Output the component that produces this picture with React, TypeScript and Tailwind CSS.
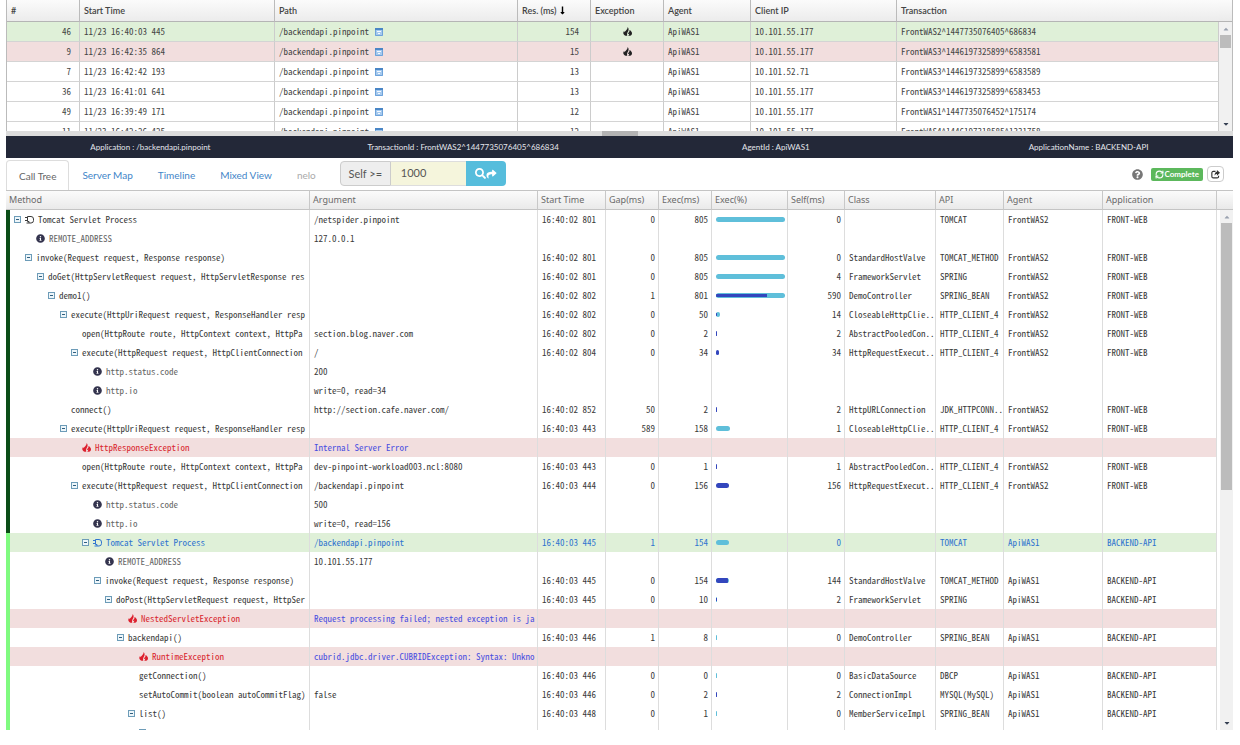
import { FaSearch, FaShare, FaQuestionCircle, FaInfoCircle, FaLongArrowAltDown, FaCaretUp, FaCaretDown } from 'react-icons/fa';
import { LuRefreshCw } from 'react-icons/lu';
import clsx from 'clsx';

interface Transaction {
    id: number;
    start: string;
    res: number;
    exception?: boolean;
    ip: string;
    txId: string;
    tone?: 'green' | 'red';
}

interface CallRow {
    depth: number;
    name: string;
    open?: boolean;
    kind?: 'info' | 'error' | 'process';
    arg?: string;
    start?: string;
    gap?: number;
    exec?: number;
    self?: number;
    cls?: string;
    api?: string;
    remote?: boolean;
    tone?: 'green' | 'red';
}

const TOTAL_MS = 805;
const INDENT = 11.4;

const TRANSACTIONS: Transaction[] = [
    { id: 46, start: '11/23 16:40:03 445', res: 154, exception: true, ip: '10.101.55.177', txId: 'FrontWAS2^1447735076405^686834', tone: 'green' },
    { id: 9, start: '11/23 16:42:35 864', res: 15, exception: true, ip: '10.101.55.177', txId: 'FrontWAS3^1446197325899^6583581', tone: 'red' },
    { id: 7, start: '11/23 16:42:42 193', res: 13, ip: '10.101.52.71', txId: 'FrontWAS3^1446197325899^6583589' },
    { id: 36, start: '11/23 16:41:01 641', res: 13, ip: '10.101.55.177', txId: 'FrontWAS3^1446197325899^6583453' },
    { id: 49, start: '11/23 16:39:49 171', res: 12, ip: '10.101.55.177', txId: 'FrontWAS1^1447735076452^175174' },
    { id: 11, start: '11/23 16:42:26 425', res: 12, ip: '10.101.55.177', txId: 'FrontWAS4^1446197318585^1331758' },
];

const CALLS: CallRow[] = [
    { depth: 0, name: 'Tomcat Servlet Process', open: true, kind: 'process', arg: '/netspider.pinpoint', start: '16:40:02 801', gap: 0, exec: 805, self: 0, api: 'TOMCAT' },
    { depth: 1, name: 'REMOTE_ADDRESS', kind: 'info', arg: '127.0.0.1' },
    { depth: 1, name: 'invoke(Request request, Response response)', open: true, start: '16:40:02 801', gap: 0, exec: 805, self: 0, cls: 'StandardHostValve', api: 'TOMCAT_METHOD' },
    { depth: 2, name: 'doGet(HttpServletRequest request, HttpServletResponse res', open: true, start: '16:40:02 801', gap: 0, exec: 805, self: 4, cls: 'FrameworkServlet', api: 'SPRING' },
    { depth: 3, name: 'demo1()', open: true, start: '16:40:02 802', gap: 1, exec: 801, self: 590, cls: 'DemoController', api: 'SPRING_BEAN' },
    { depth: 4, name: 'execute(HttpUriRequest request, ResponseHandler resp', open: true, start: '16:40:02 802', gap: 0, exec: 50, self: 14, cls: 'CloseableHttpClie..', api: 'HTTP_CLIENT_4' },
    { depth: 5, name: 'open(HttpRoute route, HttpContext context, HttpPa', arg: 'section.blog.naver.com', start: '16:40:02 802', gap: 0, exec: 2, self: 2, cls: 'AbstractPooledCon..', api: 'HTTP_CLIENT_4' },
    { depth: 5, name: 'execute(HttpRequest request, HttpClientConnection', open: true, arg: '/', start: '16:40:02 804', gap: 0, exec: 34, self: 34, cls: 'HttpRequestExecut..', api: 'HTTP_CLIENT_4' },
    { depth: 6, name: 'http.status.code', kind: 'info', arg: '200' },
    { depth: 6, name: 'http.io', kind: 'info', arg: 'write=0, read=34' },
    { depth: 4, name: 'connect()', arg: 'http://section.cafe.naver.com/', start: '16:40:02 852', gap: 50, exec: 2, self: 2, cls: 'HttpURLConnection', api: 'JDK_HTTPCONN..' },
    { depth: 4, name: 'execute(HttpUriRequest request, ResponseHandler resp', open: true, start: '16:40:03 443', gap: 589, exec: 158, self: 1, cls: 'CloseableHttpClie..', api: 'HTTP_CLIENT_4' },
    { depth: 5, name: 'HttpResponseException', kind: 'error', arg: 'Internal Server Error', tone: 'red' },
    { depth: 5, name: 'open(HttpRoute route, HttpContext context, HttpPa', arg: 'dev-pinpoint-workload003.ncl:8080', start: '16:40:03 443', gap: 0, exec: 1, self: 1, cls: 'AbstractPooledCon..', api: 'HTTP_CLIENT_4' },
    { depth: 5, name: 'execute(HttpRequest request, HttpClientConnection', open: true, arg: '/backendapi.pinpoint', start: '16:40:03 444', gap: 0, exec: 156, self: 156, cls: 'HttpRequestExecut..', api: 'HTTP_CLIENT_4' },
    { depth: 6, name: 'http.status.code', kind: 'info', arg: '500' },
    { depth: 6, name: 'http.io', kind: 'info', arg: 'write=0, read=156' },
    { depth: 6, name: 'Tomcat Servlet Process', open: true, kind: 'process', arg: '/backendapi.pinpoint', start: '16:40:03 445', gap: 1, exec: 154, self: 0, api: 'TOMCAT', remote: true, tone: 'green' },
    { depth: 7, name: 'REMOTE_ADDRESS', kind: 'info', arg: '10.101.55.177', remote: true },
    { depth: 7, name: 'invoke(Request request, Response response)', open: true, start: '16:40:03 445', gap: 0, exec: 154, self: 144, cls: 'StandardHostValve', api: 'TOMCAT_METHOD', remote: true },
    { depth: 8, name: 'doPost(HttpServletRequest request, HttpSer', open: true, start: '16:40:03 445', gap: 0, exec: 10, self: 2, cls: 'FrameworkServlet', api: 'SPRING', remote: true },
    { depth: 9, name: 'NestedServletException', kind: 'error', arg: 'Request processing failed; nested exception is ja', remote: true, tone: 'red' },
    { depth: 9, name: 'backendapi()', open: true, start: '16:40:03 446', gap: 1, exec: 8, self: 0, cls: 'DemoController', api: 'SPRING_BEAN', remote: true },
    { depth: 10, name: 'RuntimeException', kind: 'error', arg: 'cubrid.jdbc.driver.CUBRIDException: Syntax: Unkno', remote: true, tone: 'red' },
    { depth: 10, name: 'getConnection()', start: '16:40:03 446', gap: 0, exec: 0, self: 0, cls: 'BasicDataSource', api: 'DBCP', remote: true },
    { depth: 10, name: 'setAutoCommit(boolean autoCommitFlag)', arg: 'false', start: '16:40:03 446', gap: 0, exec: 2, self: 2, cls: 'ConnectionImpl', api: 'MYSQL(MySQL)', remote: true },
    { depth: 10, name: 'list()', open: true, start: '16:40:03 448', gap: 0, exec: 1, self: 0, cls: 'MemberServiceImpl', api: 'SPRING_BEAN', remote: true },
    { depth: 11, name: '', open: true, remote: true },
];

const TABS = ['Call Tree', 'Server Map', 'Timeline', 'Mixed View', 'nelo'];
const MONO = "font-['Noto_Sans_Mono_CJK_JP','Liberation_Mono',monospace]";

function Flame({ className }: { className?: string }) {
    return (
        <svg viewBox="0 0 16 16" fill="currentColor" className={clsx('h-[9px] w-[9px] shrink-0', className)}>
            <path d="M8 0c2.500 2.200 2.400 5 1.200 7.500C8.200 9.600 6.500 11 7.500 15.500H4.500C2 14.500.5 12.500.5 10.500c0-1.500.7-2.700 1.600-3.500 0 1 .3 1.700.9 2.200C4.500 6 8.800 4.500 8 0z" />
            <path d="M11.500 5.500c2.500 1.200 4.500 3.500 4.500 6 0 2-1.500 3.500-3.500 4H9c1.800-1.500 2.300-2.800 1.900-4.500-.5 1-1.200 1.500-2.100 1.500C8.800 10 12.500 9 11.500 5.500z" />
        </svg>
    );
}

function Toggle() {
    return (
        <button aria-label="Collapse" className="mr-1 h-[7px] w-[7px] shrink-0">
            <svg viewBox="0 0 7 7" className="block h-[7px] w-[7px]">
                <rect x=".5" y=".5" width="6" height="6" fill="#eef6fa" stroke="#6d9cb8" />
                <path d="M2 3.500h3" stroke="#2f5f80" />
            </svg>
        </button>
    );
}

function ProcessIcon() {
    return (
        <svg viewBox="0 0 9 8" fill="none" stroke="currentColor" className="h-2 w-[9px] shrink-0">
            <path d="M2.500.5H6a2.500 2.500 0 0 1 2.500 2.500v1.500A2.500 2.500 0 0 1 6 7H4V5.500H2.500z" />
            <path d="M0 1.500h3M0 4.500h3M1.500 7H4" />
        </svg>
    );
}

function DetailIcon() {
    return (
        <svg viewBox="0 0 8 8" className="h-2 w-2">
            <rect width="8" height="8" fill="#a5c9ee" />
            <rect width="8" height="2" fill="#4a86c6" />
            <path d="M2 3.500h4M3 5.500h2" stroke="#f4f9ff" />
            <path d="M.5 2v5.500h7V2" fill="none" stroke="#6ea3da" />
        </svg>
    );
}

function Scrollbar({ thumb }: { thumb: string }) {
    return (
        <div className="flex min-h-0 flex-1 flex-col items-center bg-[#f1f1f1] py-[3px]">
            <FaCaretUp className="h-2 w-2 text-gray-400" />
            <div className="flex min-h-0 w-full flex-1 flex-col px-px py-[2px]">
                <div className={clsx('w-full bg-[#bcbcbc]', thumb)} />
            </div>
            <FaCaretDown className="h-2 w-2 text-gray-700" />
        </div>
    );
}

function ExecBar({ exec, self }: { exec: number; self: number }) {
    const width = Math.min(100, (exec / TOTAL_MS) * 100);
    const inner = exec ? (self / exec) * 100 : 0;
    return (
        <div className="flex h-[5px] min-w-px items-center overflow-hidden rounded-full bg-[#5fbfda]" style={{ width: `${width}%` }}>
            {inner > 5 && (
                <div className={clsx('bg-[#3346bd]', inner > 90 ? 'h-[5px]' : 'h-[3px]')} style={{ width: `${inner}%` }} />
            )}
        </div>
    );
}

function TransactionList() {
    const th = 'h-[22px] border-r border-b border-r-[#bbb] border-b-[#b5b5b5] px-1 text-left font-semibold';
    const td = 'h-[20px] truncate border-r border-b border-r-[#ccc] border-b-[#d4d4d4] px-1';
    return (
        <section className="flex h-[131px] shrink-0 overflow-hidden border-x border-[#bbb]">
            <div className="min-w-0 flex-1">
                <table className="w-full table-fixed border-separate border-spacing-0 text-[9px] leading-3 text-[#444]">
                    <colgroup>
                        <col className="w-[73px]" />
                        <col className="w-[195px]" />
                        <col className="w-[243px]" />
                        <col className="w-[73px]" />
                        <col className="w-[73px]" />
                        <col className="w-[87px]" />
                        <col className="w-[146px]" />
                        <col />
                    </colgroup>
                    <thead className="bg-linear-to-b from-[#fbfbfb] to-[#ebebeb] font-['Lato',sans-serif]">
                        <tr>
                            <th className={th}>#</th>
                            <th className={th}>Start Time</th>
                            <th className={th}>Path</th>
                            <th className={th}>
                                <span className="flex items-center gap-px">Res. (ms) <FaLongArrowAltDown className="h-[9px] w-[9px] text-black" /></span>
                            </th>
                            <th className={th}>Exception</th>
                            <th className={th}>Agent</th>
                            <th className={th}>Client IP</th>
                            <th className="h-[22px] border-b border-b-[#b5b5b5] px-1 text-left font-semibold">Transaction</th>
                        </tr>
                    </thead>
                    <tbody className={MONO}>
                        {TRANSACTIONS.map(t => (
                            <tr key={t.id} className={clsx(t.tone === 'green' && 'bg-[#dff0d8]', t.tone === 'red' && 'bg-[#f2dede]')}>
                                <td className={clsx(td, 'pr-2 text-right')}>{t.id}</td>
                                <td className={td}>{t.start}</td>
                                <td className={td}>
                                    <span className="flex items-center gap-[6px]">/backendapi.pinpoint <DetailIcon /></span>
                                </td>
                                <td className={clsx(td, 'pr-[11px] text-right')}>{t.res}</td>
                                <td className={td}>{t.exception && <Flame className="mx-auto text-[#222]" />}</td>
                                <td className={td}>ApiWAS1</td>
                                <td className={td}>{t.ip}</td>
                                <td className={td}>{t.txId}</td>
                            </tr>
                        ))}
                    </tbody>
                </table>
            </div>
            <div className="flex w-[13px] shrink-0 flex-col">
                <div className="h-[22px] border-b border-[#b5b5b5] bg-linear-to-b from-[#fbfbfb] to-[#ebebeb]" />
                <Scrollbar thumb="h-[13px]" />
            </div>
        </section>
    );
}

function Summary() {
    return (
        <div className="h-[22px] shrink-0 overflow-hidden bg-[#232838] text-[8px] leading-[22px] text-[#e4e6ec]">
            <div className="-mx-3 grid grid-cols-4 text-center">
                <span>Application : /backendapi.pinpoint</span>
                <span>TransactionId : FrontWAS2^1447735076405^686834</span>
                <span>AgentId : ApiWAS1</span>
                <span>ApplicationName : BACKEND-API</span>
            </div>
        </div>
    );
}

function Toolbar() {
    return (
        <div className="flex h-8 shrink-0 items-end text-[10px]">
            <nav className="flex gap-px">
                {TABS.map((tab, i) => (
                    <a
                        key={tab}
                        href="#"
                        className={clsx(
                            'h-[30px] px-3 leading-[30px]',
                            i === 0 && 'rounded-t-sm border-x border-t border-[#ddd] text-[#666]',
                            i > 0 && i < 4 && 'text-[#4285c8]',
                            i === 4 && 'text-[#aaa]',
                        )}
                    >
                        {tab}
                    </a>
                ))}
            </nav>
            <form className="mb-1 ml-3 flex h-[25px] text-[11px] text-[#555]">
                <label htmlFor="self" className="w-[51px] rounded-l-sm border border-[#ccc] bg-[#eee] text-center leading-[23px]">Self &gt;=</label>
                <input id="self" defaultValue="1000" className="w-[75px] border-y border-[#ddd] bg-[#f5f5dc] px-[10px] outline-none" />
                <button type="button" aria-label="Search" className="flex w-10 items-center justify-center rounded-r-sm bg-[#56bddc] text-white">
                    <FaSearch className="h-[11px] w-[11px]" />
                    <FaShare className="h-[10px] w-[11px]" />
                </button>
            </form>
            <div className="mr-[9px] mb-2 ml-auto flex items-center gap-1">
                <FaQuestionCircle className="mr-1 h-[11px] w-[11px] text-[#777]" />
                <button className="flex h-[13px] items-center gap-px rounded-xs bg-[#5cb85c] px-1 text-[8px] font-bold text-white">
                    <LuRefreshCw className="h-[9px] w-[9px]" strokeWidth={3} />
                    Complete
                </button>
                <button aria-label="Open in new window" className="flex h-4 w-[17px] items-center justify-center rounded-sm border border-[#ccc] text-[#333]">
                    <svg viewBox="0 0 16 16" className="h-[9px] w-[9px]">
                        <path d="M8 2.500H4a2.500 2.500 0 0 0-2.500 2.500v6.500A2.500 2.500 0 0 0 4 14h7a2.500 2.500 0 0 0 2.500-2.500V10" fill="none" stroke="currentColor" strokeWidth="2" />
                        <path d="M10.500 0 16 5l-5.500 5V7C8.500 7 7.300 8 6.500 10 6 6 8 3.200 10.500 3z" fill="currentColor" />
                    </svg>
                </button>
            </div>
        </div>
    );
}

function MethodCell({ row }: { row: CallRow }) {
    return (
        <div className="flex items-center overflow-hidden whitespace-nowrap" style={{ paddingLeft: 4 + Math.round(row.depth * INDENT) }}>
            {row.open ? <Toggle /> : <span className="w-[11px] shrink-0" />}
            {row.kind && (
                <span className={clsx('mr-1 shrink-0', row.kind === 'error' && 'text-[#dd1f2d]')}>
                    {row.kind === 'error' && <Flame />}
                    {row.kind === 'info' && <FaInfoCircle className="h-[9px] w-[9px] text-[#34344e]" />}
                    {row.kind === 'process' && <ProcessIcon />}
                </span>
            )}
            <span className={clsx(row.kind === 'error' && 'text-[#d9272e]', row.kind === 'info' && 'text-[#666]')}>{row.name}</span>
        </div>
    );
}

function CallTree() {
    const th = 'h-5 truncate border-y border-r border-y-[#c4c4c4] border-r-[#c8c8c8] px-[3px] text-left font-normal';
    const td = 'h-[19px] overflow-hidden whitespace-nowrap border-r border-[#ddd] p-0 pl-1';
    const num = clsx(td, 'pr-[3px] text-right');
    return (
        <section className="flex min-h-0 flex-1 overflow-hidden">
            <div className="min-w-0 flex-1">
                <table className="w-full table-fixed border-separate border-spacing-0 text-[9px] leading-3 text-[#3a3a3a]">
                    <colgroup>
                        <col className="w-[304px]" />
                        <col className="w-[228px]" />
                        <col className="w-[68px]" />
                        <col className="w-[53px]" />
                        <col className="w-[53px]" />
                        <col className="w-[76px]" />
                        <col className="w-[57px]" />
                        <col className="w-[91px]" />
                        <col className="w-[68px]" />
                        <col className="w-[99px]" />
                        <col />
                    </colgroup>
                    <thead className="bg-linear-to-b from-[#fcfcfc] to-[#e9e9e9] font-['Noto_Sans',sans-serif] text-[#6a6a6a]">
                        <tr>
                            {['Method', 'Argument', 'Start Time', 'Gap(ms)', 'Exec(ms)', 'Exec(%)', 'Self(ms)', 'Class', 'API', 'Agent', 'Application'].map(h => (
                                <th key={h} className={th}>{h}</th>
                            ))}
                        </tr>
                    </thead>
                    <tbody className={MONO}>
                        {CALLS.map((row, i) => (
                            <tr
                                key={i}
                                className={clsx(
                                    row.tone === 'green' && 'bg-[#dff0d8] text-[#2f74cf]',
                                    row.tone === 'red' && 'bg-[#f2dede] text-[#4a4fe0]',
                                )}
                            >
                                <td className={clsx('h-[19px] overflow-hidden border-r border-l-4 border-r-[#ddd] p-0', row.remote ? 'border-l-[#80fb80]' : 'border-l-[#0b4d17]')}>
                                    <MethodCell row={row} />
                                </td>
                                <td className={td}>{row.arg}</td>
                                <td className={td}>{row.start}</td>
                                <td className={num}>{row.gap}</td>
                                <td className={num}>{row.exec}</td>
                                <td className={clsx(td, 'pr-[2px]')}>{row.exec !== undefined && <ExecBar exec={row.exec} self={row.self ?? 0} />}</td>
                                <td className={num}>{row.self}</td>
                                <td className={td}>{row.cls}</td>
                                <td className={td}>{row.api}</td>
                                <td className={td}>{row.api && (row.remote ? 'ApiWAS1' : 'FrontWAS2')}</td>
                                <td className={td}>{row.api && (row.remote ? 'BACKEND-API' : 'FRONT-WEB')}</td>
                            </tr>
                        ))}
                    </tbody>
                </table>
            </div>
            <div className="flex w-4 shrink-0 flex-col">
                <div className="h-5 border-y border-[#c4c4c4] bg-linear-to-b from-[#fcfcfc] to-[#e9e9e9]" />
                <div className="ml-[3px] flex min-h-0 flex-1 flex-col">
                    <Scrollbar thumb="h-[54%]" />
                </div>
            </div>
        </section>
    );
}

export default function App() {
    return (
        <div className="flex h-screen flex-col overflow-hidden bg-white pr-[7px] pb-[15px] pl-[6px] font-['Lato',sans-serif]">
            <TransactionList />
            <div className="h-[5px] shrink-0 bg-[#dcdcdc]">
                <div className="mx-auto h-full w-9 bg-[#b3b3b3]" />
            </div>
            <Summary />
            <Toolbar />
            <CallTree />
        </div>
    );
}
